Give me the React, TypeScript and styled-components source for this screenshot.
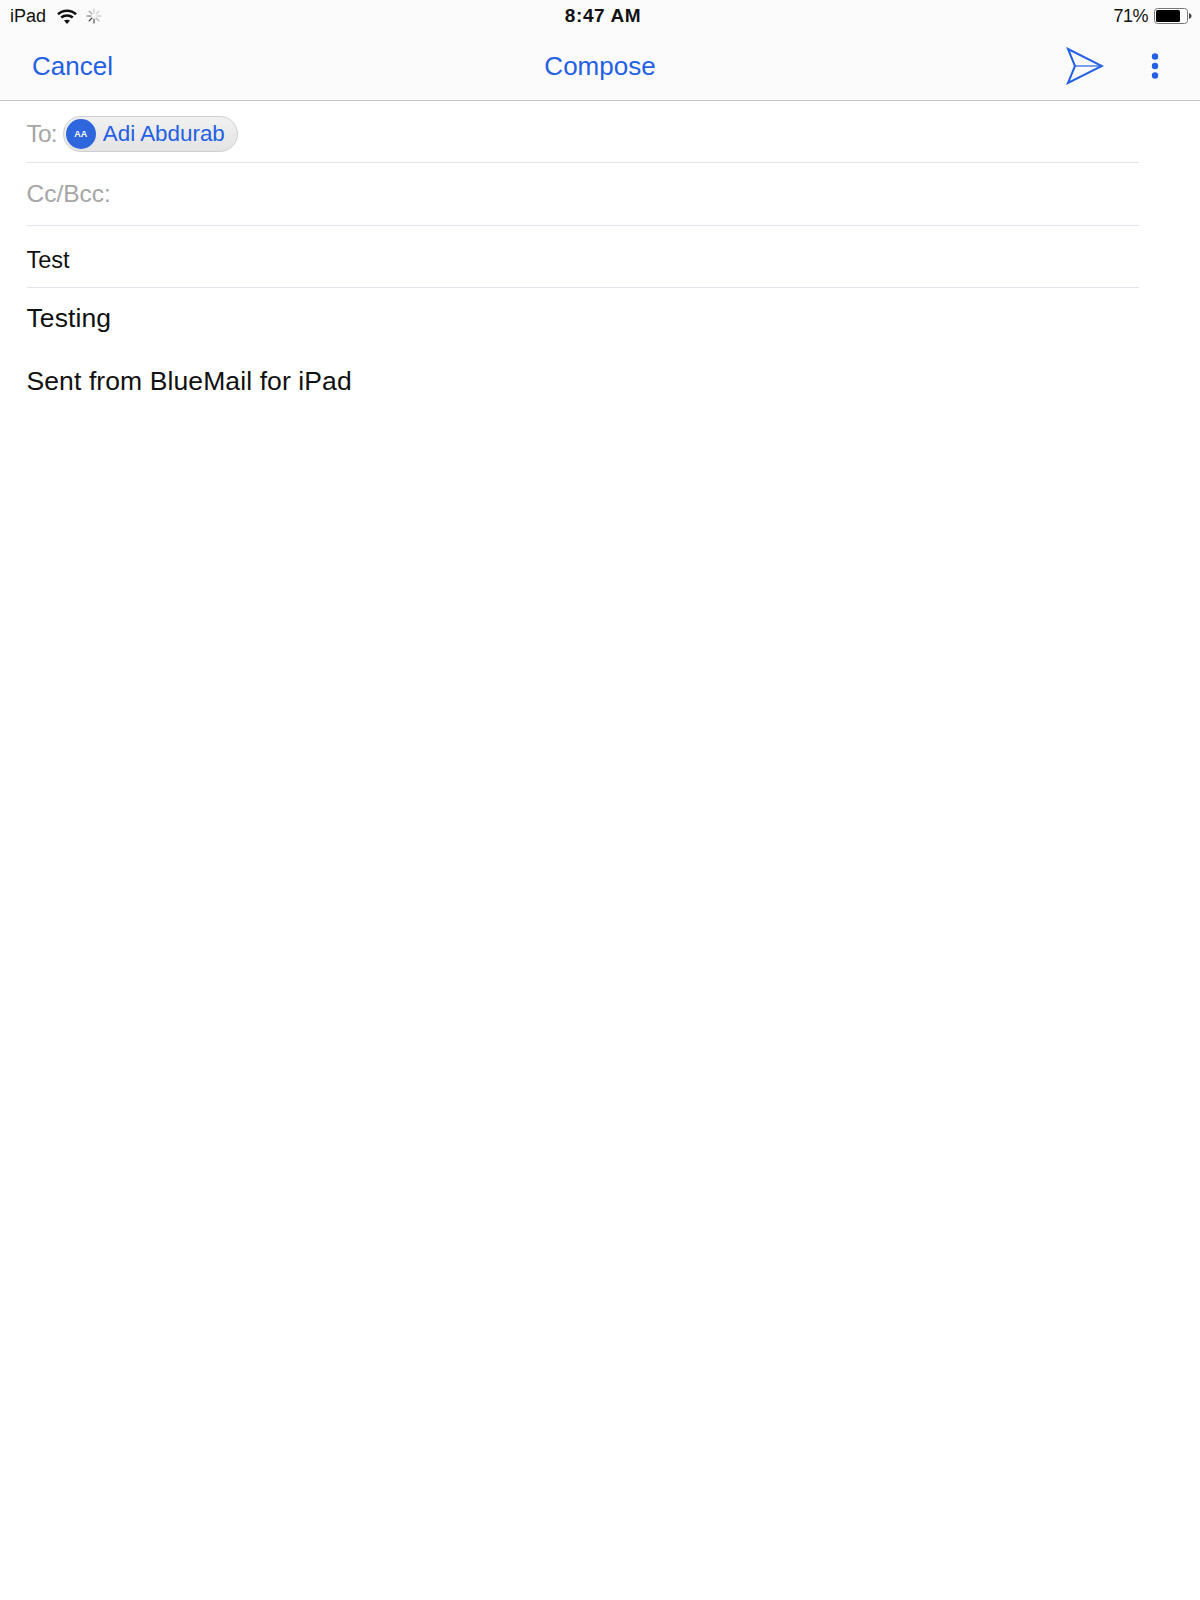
import styled, { createGlobalStyle } from "styled-components";

const GlobalStyle = createGlobalStyle`
    html, body {
        margin: 0;
        padding: 0;
        background: #fff;
        font-family: "Liberation Sans", Arial, sans-serif;
    }
`;

const Page = styled.div`
    width: 1200px;
    height: 1600px;
    background: #fff;
    overflow: hidden;
`;

const Header = styled.header`
    background: #fbfbfb;
    border-bottom: 1px solid #c4c4c4;
    height: 101px;
    box-sizing: border-box;
`;

const StatusBar = styled.div`
    display: grid;
    grid-template-columns: 1fr auto 1fr;
    align-items: center;
    height: 32px;
    padding: 0 8px 0 10px;
    font-size: 18px;
    color: #111;
`;

const StatusLeft = styled.div`
    display: flex;
    align-items: center;
    gap: 9px;
`;

const DeviceName = styled.span`
    margin-right: 2px;
`;

const StatusRight = styled.div`
    display: flex;
    align-items: center;
    justify-content: flex-end;
    gap: 6px;
    letter-spacing: -0.5px;
`;

const Clock = styled.div`
    font-weight: 700;
    font-size: 19px;
    letter-spacing: 0.6px;
    padding-left: 4px;
`;

const NavBar = styled.nav`
    display: grid;
    grid-template-columns: 1fr auto 1fr;
    align-items: center;
    height: 68px;
    padding: 0 32px;
    font-size: 26px;
    color: #2360e4;
`;

const NavActions = styled.div`
    display: flex;
    align-items: center;
    justify-content: flex-end;
    gap: 47px;
    padding-right: 9px;
`;

const Fields = styled.section`
    width: 1112px;
    margin-left: 26.5px;
`;

const FieldRow = styled.div<{ $shift: number }>`
    display: flex;
    align-items: center;
    gap: 6px;
    height: 62.3px;
    box-sizing: border-box;
    padding-top: ${({ $shift }) => $shift}px;
    border-bottom: 1px solid #dfe3ea;
    font-size: 23.5px;
    color: #111;
`;

const FieldLabel = styled.span<{ $tight?: boolean }>`
    color: #a6a6a6;
    font-size: 24.5px;
    letter-spacing: ${({ $tight }) => ($tight ? '-0.8px' : '0')};
`;

const Chip = styled.div`
    display: flex;
    align-items: center;
    gap: 7px;
    height: 36px;
    box-sizing: border-box;
    padding: 0 12px 0 2px;
    border: 1px solid #cfcfcf;
    border-radius: 18px;
    background: linear-gradient(#f1f1f1, #e4e4e4);
    color: #2360e4;
    font-size: 22.4px;
`;

const Avatar = styled.div`
    display: flex;
    align-items: center;
    justify-content: center;
    width: 30px;
    height: 30px;
    border-radius: 50%;
    background: #2e66de;
    color: #fff;
    font-size: 9px;
    font-weight: 700;
`;

const Body = styled.div`
    margin-left: 26.5px;
    padding-top: 14px;
    font-size: 26.5px;
    line-height: 32px;
    letter-spacing: 0.1px;
    color: #111;
`;

const BodyLine = styled.p`
    margin: 0 0 31px;
`;

const Wifi = () => (
    <svg width="20" height="15" viewBox="0 0 20 15" fill="none" stroke="#111" strokeWidth="2.6">
        <path d="M1 5.2C6 .6 14 .6 19 5.2" />
        <path d="M4.2 8.6c3.3-2.9 8.3-2.9 11.6 0" />
        <path d="M10 15l-3-3.4c1.7-1.3 4.3-1.3 6 0z" fill="#111" stroke="none" />
    </svg>
);

const Spinner = () => (
    <svg width="16" height="16" viewBox="0 0 16 16" stroke="#777" strokeWidth="1.2" strokeLinecap="round">
        <path d="M8 1v4" stroke="#ccc" />
        <path d="M12.9 3.1l-2.8 2.8" stroke="#ccc" />
        <path d="M15 8h-4" stroke="#bbb" />
        <path d="M12.9 12.9l-2.8-2.8" stroke="#aaa" />
        <path d="M8 15v-4" stroke="#555" />
        <path d="M3.1 12.9l2.8-2.8" stroke="#333" />
        <path d="M1 8h4" stroke="#666" />
        <path d="M3.1 3.1l2.8 2.8" stroke="#999" />
    </svg>
);

const Battery = () => (
    <svg width="38" height="16" viewBox="0 0 38 16">
        <rect x="0.5" y="0.5" width="33" height="15" rx="3" fill="none" stroke="#777" />
        <rect x="2" y="2" width="24" height="12" rx="1.5" fill="#000" />
        <path d="M35 5.2c1.7.3 2.5 1.4 2.5 2.8s-.8 2.5-2.5 2.8z" fill="#444" />
    </svg>
);

const SendIcon = () => (
    <svg width="38" height="38" viewBox="0 0 38 38" fill="none" stroke="#2360e4" strokeWidth="2">
        <path d="M2 2l34 17L2 36l7-17z" strokeLinejoin="miter" />
        <path d="M9 19h27" strokeWidth="1.2" />
    </svg>
);

const MoreIcon = () => (
    <svg width="8" height="28" viewBox="0 0 8 28" fill="#2360e4">
        <circle cx="4" cy="4.5" r="3.2" />
        <circle cx="4" cy="14" r="3.2" />
        <circle cx="4" cy="23.5" r="3.2" />
    </svg>
);

export default function App() {
    return (
        <Page>
            <GlobalStyle />
            <Header>
                <StatusBar>
                    <StatusLeft>
                        <DeviceName>iPad</DeviceName>
                        <Wifi />
                        <Spinner />
                    </StatusLeft>
                    <Clock>8:47 AM</Clock>
                    <StatusRight>
                        <span>71%</span>
                        <Battery />
                    </StatusRight>
                </StatusBar>
                <NavBar>
                    <span>Cancel</span>
                    <span>Compose</span>
                    <NavActions>
                        <SendIcon />
                        <MoreIcon />
                    </NavActions>
                </NavBar>
            </Header>
            <Fields>
                <FieldRow $shift={4}>
                    <FieldLabel $tight>To:</FieldLabel>
                    <Chip>
                        <Avatar>AA</Avatar>
                        <span>Adi Abdurab</span>
                    </Chip>
                </FieldRow>
                <FieldRow $shift={0}>
                    <FieldLabel>Cc/Bcc:</FieldLabel>
                </FieldRow>
                <FieldRow $shift={8}>Test</FieldRow>
            </Fields>
            <Body>
                <BodyLine>Testing</BodyLine>
                <BodyLine>Sent from BlueMail for iPad</BodyLine>
            </Body>
        </Page>
    );
}
